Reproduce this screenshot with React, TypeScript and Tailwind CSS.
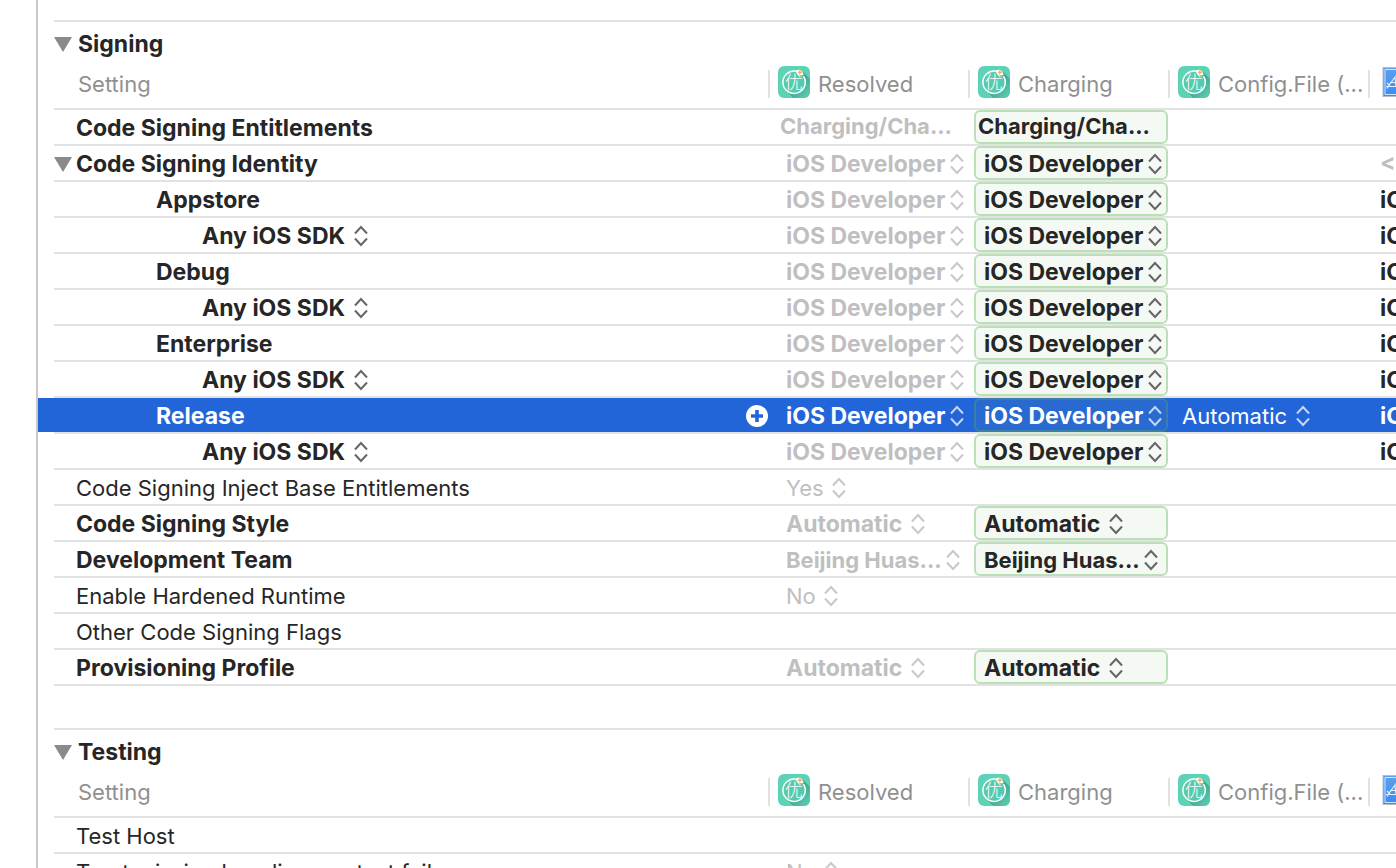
import { useId } from 'react';
import clsx from 'clsx';

type Tone = 'normal' | 'faded' | 'selected';

interface Setting {
  name: string;
  level?: 0 | 1 | 2;
  bold?: boolean;
  expandable?: boolean;
  conditional?: boolean;
  selected?: boolean;
  kind?: 'text' | 'popup';
  resolved?: string;
  target?: string;
  config?: string;
  project?: string;
}

const DEV = 'iOS Developer';

const sdkRow: Setting = {
  name: 'Any iOS SDK',
  level: 2,
  bold: true,
  conditional: true,
  resolved: DEV,
  target: DEV,
  project: DEV,
};

const configRow = (name: string): Setting => ({
  name,
  level: 1,
  bold: true,
  resolved: DEV,
  target: DEV,
  project: DEV,
});

const signing: Setting[] = [
  {
    name: 'Code Signing Entitlements',
    bold: true,
    kind: 'text',
    resolved: 'Charging/Cha...',
    target: 'Charging/Cha...',
  },
  {
    name: 'Code Signing Identity',
    bold: true,
    expandable: true,
    resolved: DEV,
    target: DEV,
    project: '<Multiple values>',
  },
  configRow('Appstore'),
  sdkRow,
  configRow('Debug'),
  sdkRow,
  configRow('Enterprise'),
  sdkRow,
  { ...configRow('Release'), selected: true, config: 'Automatic' },
  sdkRow,
  { name: 'Code Signing Inject Base Entitlements', resolved: 'Yes' },
  { name: 'Code Signing Style', bold: true, resolved: 'Automatic', target: 'Automatic' },
  { name: 'Development Team', bold: true, resolved: 'Beijing Huas...', target: 'Beijing Huas...' },
  { name: 'Enable Hardened Runtime', resolved: 'No' },
  { name: 'Other Code Signing Flags' },
  { name: 'Provisioning Profile', bold: true, resolved: 'Automatic', target: 'Automatic' },
];

const testing: Setting[] = [
  { name: 'Test Host' },
  { name: 'Treat missing baselines as test failures', resolved: 'No' },
];

function AppIcon() {
  const id = useId();
  return (
    <svg viewBox="0 0 32 32" className="size-8 shrink-0" aria-hidden="true">
      <defs>
        <clipPath id={`${id}-clip`}>
          <rect width="32" height="32" rx="6" />
        </clipPath>
        <linearGradient id={`${id}-shade`} x1="0" y1="0" x2="1" y2="1">
          <stop offset="0.3" stopColor="#3a9a84" />
          <stop offset="0.85" stopColor="#5ed2b6" />
        </linearGradient>
      </defs>
      <g clipPath={`url(#${id}-clip)`}>
        <rect width="32" height="32" fill="#5ed2b6" />
        <path d="M8 24.5 L25 6 L36 17 L36 36 L19 36Z" fill={`url(#${id}-shade)`} />
        <circle cx="16" cy="16.2" r="11.2" fill="#58c9ae" />
        <path
          d="M17.5 5.1 A11.2 11.2 0 1 0 25.8 10.6"
          fill="none"
          stroke="#fff"
          strokeWidth="1.5"
          strokeLinecap="round"
        />
        <text
          x="15.8"
          y="22.6"
          textAnchor="middle"
          fontSize="18"
          fill="#fff"
          className="font-['Noto_Sans_CJK_SC',sans-serif] font-light"
        >
          优
        </text>
        <path d="M17.8 5.6 C18.5 2.6 24.6 2.8 25.6 9 C22 10 18.6 9 17.8 5.6Z" fill="#fff" />
        <path d="M21.8 3.8 L22.8 5.6 L24.9 6.2 L22.8 7.1 L21.8 9 L20.9 7.1 L19 6.2 L20.9 5.6Z" fill="#f5b04a" />
      </g>
    </svg>
  );
}

function ProjectIcon() {
  const id = useId();
  return (
    <svg viewBox="0 0 28 32" className="h-8 w-7 shrink-0" aria-hidden="true">
      <defs>
        <linearGradient id={id} x1="0" y1="0" x2="0" y2="1">
          <stop offset="0" stopColor="#5f9fe8" />
          <stop offset="1" stopColor="#3a8cf8" />
        </linearGradient>
      </defs>
      <rect x="0.5" y="1" width="27" height="30" fill="#b4bfcb" />
      <rect x="1.5" y="2" width="25" height="28" fill={`url(#${id})`} />
      <path d="M3 28.5 V3.5 H25 V28.5Z" fill="none" stroke="#cfe4ff" />
      <path
        d="M4 20.5 H22 M5 22.5 L9 16 M8 18 L13 11 L14 21 M9.5 16.5 H14 M5 17 L8 20 M14 9 L20 23"
        fill="none"
        stroke="#e3f0ff"
        strokeWidth="1.1"
      />
    </svg>
  );
}

function Chevrons({ className }: { className?: string }) {
  return (
    <svg
      viewBox="0 0 14 22"
      className={clsx('h-[22px] w-3.5', className)}
      fill="none"
      stroke="currentColor"
      strokeWidth="2"
      aria-hidden="true"
    >
      <path d="M1 8.5 L7 2 L13 8.5 M1 13.5 L7 20 L13 13.5" />
    </svg>
  );
}

function Disclosure({ label }: { label: string }) {
  return (
    <button type="button" aria-label={`Toggle ${label}`} aria-expanded="true" className="shrink-0 text-[#8a8a8a]">
      <svg viewBox="0 0 18 15" className="h-[15px] w-[18px]" fill="currentColor" aria-hidden="true">
        <path d="M0 0 H18 L9 15Z" />
      </svg>
    </button>
  );
}

interface PopupProps {
  value: string;
  label: string;
  bold?: boolean;
  tone: Tone;
}

function Popup({ value, label, bold, tone }: PopupProps) {
  const truncated = value.endsWith('...');
  // values that fill the column sit closer to the arrows
  const tight = truncated || value === DEV;
  return (
    <span className="relative inline-flex items-center">
      <select
        aria-label={label}
        defaultValue={value}
        className={clsx(
          'h-7 appearance-none bg-transparent outline-none',
          tight ? 'pr-[18px]' : 'pr-[22px]',
          bold && 'font-bold',
          bold && !truncated && 'text-[23px]',
          tone === 'normal' && 'text-[#262626]',
          tone === 'faded' && 'text-[#bfbfbf]',
          tone === 'selected' && 'text-white',
        )}
      >
        <option>{value}</option>
      </select>
      <Chevrons
        className={clsx(
          'pointer-events-none absolute right-0',
          tone === 'normal' && 'text-[#666]',
          tone === 'faded' && 'text-[#c8c8c8]',
          tone === 'selected' && 'text-[#c3d6f5]',
        )}
      />
    </span>
  );
}

function SettingRow({ row }: { row: Setting }) {
  const { name, level = 0, bold, selected } = row;
  const fill = selected && 'bg-[#2265d9] bg-clip-padding';
  const base = clsx('h-9 border-b-2 border-[#e2e2e2]', fill);
  const cell = clsx(base, 'px-0 pt-0.5 pb-0');
  const tone: Tone = selected ? 'selected' : 'normal';
  const faded: Tone = selected ? 'selected' : 'faded';

  return (
    <tr className={selected ? 'text-white' : 'text-[#262626]'}>
      <td className={clsx('border-b-2 border-transparent p-0', fill)} />
      <th scope="row" className={clsx(cell, 'text-left', bold ? 'text-[23px] font-bold' : 'font-normal')}>
        <div className="flex items-center">
          <span
            className={clsx(
              'flex shrink-0',
              level === 0 && 'w-[22px]',
              level === 1 && 'w-[102px]',
              level === 2 && 'w-[148px]',
            )}
          >
            {row.expandable && <Disclosure label={name} />}
          </span>
          {row.conditional ? <Popup value={name} label="SDK condition" bold={bold} tone={tone} /> : name}
          {selected && (
            <button type="button" aria-label="Add condition" className="ml-auto">
              <svg viewBox="0 0 22 22" className="size-[22px]" aria-hidden="true">
                <circle cx="11" cy="11" r="11" fill="#fff" />
                <path d="M11 5 V17 M5 11 H17" stroke="#2265d9" strokeWidth="3.6" />
              </svg>
            </button>
          )}
        </div>
      </th>
      <td className={row.kind === 'text' ? clsx(base, 'px-0 pt-0 pb-0.5') : cell}>
        {row.resolved &&
          (row.kind === 'text' ? (
            <span className="block pl-3 font-bold text-[#bfbfbf]">{row.resolved}</span>
          ) : (
            <div className="flex pl-[18px]">
              <Popup value={row.resolved} label={`${name}, resolved`} bold={bold} tone={faded} />
            </div>
          ))}
      </td>
      <td className={clsx(base, 'p-0')}>
        {row.target && (
          <div
            className={clsx(
              'ml-1.5 flex h-[34px] items-center rounded-md border-2',
              row.kind === 'text' ? 'pb-0.5 pl-0.5' : 'pt-0.5 pl-2',
              selected ? 'border-[#3a80a6] bg-[#286ad0]' : 'border-[#bbdfb7] bg-[#f4f9f4]',
            )}
          >
            {row.kind === 'text' ? (
              <input
                type="text"
                aria-label={`${name}, Charging`}
                defaultValue={row.target}
                className="w-full min-w-0 bg-transparent font-bold outline-none"
              />
            ) : (
              <Popup value={row.target} label={`${name}, Charging`} bold={bold} tone={tone} />
            )}
          </div>
        )}
      </td>
      <td className={cell}>
        {row.config && (
          <div className="flex pl-3.5">
            <Popup value={row.config} label={`${name}, Config.File`} tone={tone} />
          </div>
        )}
      </td>
      <td className={cell}>
        {row.project && (
          <div className="flex overflow-hidden pl-3">
            <Popup
              value={row.project}
              label={`${name}, project`}
              bold
              tone={row.project === DEV ? tone : 'faded'}
            />
          </div>
        )}
      </td>
    </tr>
  );
}

function ColumnHead({ title }: { title: string }) {
  return (
    <th scope="col" className="h-11 border-b-2 border-[#e2e2e2] p-0 align-top font-normal">
      <div className="flex h-8 items-end">
        <span className="h-7 w-0.5 bg-[#e2e2e2]" />
        <span className="ml-2">
          <AppIcon />
        </span>
        <span className="ml-2 leading-7 whitespace-nowrap">{title}</span>
      </div>
    </th>
  );
}

function SettingsGroup({ title, rows }: { title: string; rows: Setting[] }) {
  return (
    <table className="w-full table-fixed border-separate border-spacing-0 whitespace-nowrap">
      <colgroup>
        <col className="w-4" />
        <col />
        <col className="w-[200px]" />
        <col className="w-[200px]" />
        <col className="w-[200px]" />
        <col className="w-7" />
      </colgroup>
      <thead className="text-left text-[#909090]">
        <tr>
          <td className="p-0" />
          <th colSpan={5} className="h-[46px] border-t-2 border-[#e2e2e2] p-0 text-[23px] text-[#262626]">
            <div className="flex items-center gap-1.5">
              <Disclosure label={title} />
              {title}
            </div>
          </th>
        </tr>
        <tr>
          <td className="p-0" />
          <th scope="col" className="h-11 border-b-2 border-[#e2e2e2] p-0 align-top font-normal">
            <div className="flex h-8 items-end pl-6 leading-7">Setting</div>
          </th>
          <ColumnHead title="Resolved" />
          <ColumnHead title="Charging" />
          <ColumnHead title="Config.File (..." />
          <th aria-label="Project" className="border-b-2 border-[#e2e2e2] p-0 align-top">
            <div className="flex h-8 items-end overflow-hidden">
              <span className="h-7 w-0.5 shrink-0 bg-[#e2e2e2]" />
              <span className="ml-3">
                <ProjectIcon />
              </span>
            </div>
          </th>
        </tr>
      </thead>
      <tbody>
        {rows.map((row, i) => (
          <SettingRow key={i} row={row} />
        ))}
      </tbody>
    </table>
  );
}

export default function App() {
  return (
    <div className="h-screen overflow-hidden bg-white pl-9 font-['Inter',sans-serif] text-[22px] leading-7">
      <main className="flex min-h-full flex-col gap-[42px] border-l-2 border-[#c8c8c8] pt-5">
        <SettingsGroup title="Signing" rows={signing} />
        <SettingsGroup title="Testing" rows={testing} />
      </main>
    </div>
  );
}
